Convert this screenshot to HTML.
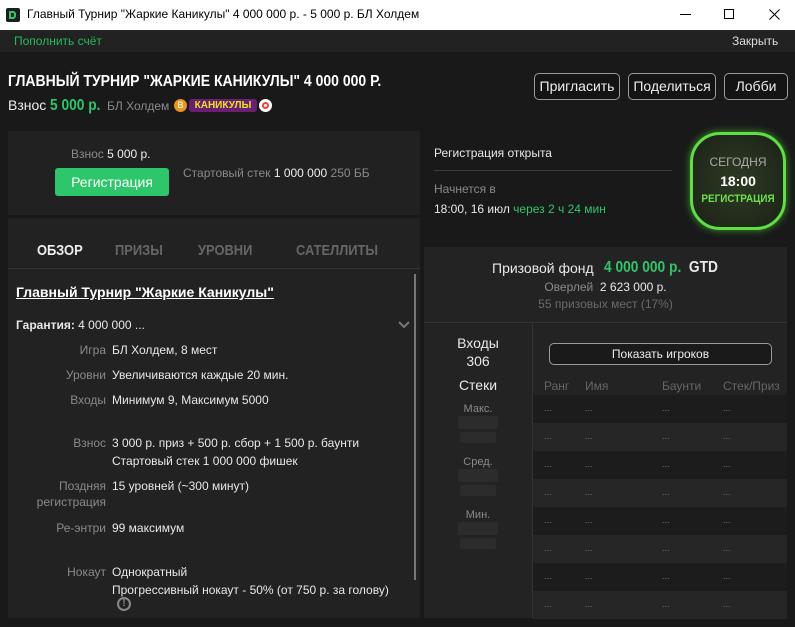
<!DOCTYPE html>
<html><head><meta charset="utf-8">
<style>
*{margin:0;padding:0;box-sizing:border-box}
body{width:795px;height:627px;background:#19191a;font-family:"Liberation Sans",sans-serif;color:#e8e8e8;position:relative;overflow:hidden;font-size:12px}
.a{position:absolute;white-space:nowrap}
.g{color:#2ec66a}
.m{color:#8a8a8a}
.cn{display:inline-block;transform:scaleX(0.86);transform-origin:left center}
.btn{position:absolute;border:1px solid #9a9a9a;border-radius:5px;height:27px;line-height:25px;text-align:center;font-size:14px;color:#eee;background:#141414}
.lab{position:absolute;right:0;width:106px;text-align:right;color:#8a8a8a;font-size:12px;line-height:16px}
.val{position:absolute;left:112px;font-size:12px;line-height:18px;color:#e8e8e8;white-space:nowrap}
.dots{position:absolute;color:#777;font-size:9px}
.bar{position:absolute;background:#2c2c2c;border-radius:2px}
.tab{position:absolute;top:242px;font-size:15px;font-weight:bold;color:#666;transform:scaleX(0.86);transform-origin:left center;white-space:nowrap}
</style></head><body>
<div class="a" style="left:0;top:0;width:795px;height:30px;background:#fff"></div>
<div class="a" style="left:6px;top:8px;width:14px;height:14px;background:#1e1e1e;border-radius:2px"><div style="position:absolute;left:3px;top:3px;width:7px;height:8px;border:2px solid #2ec66a;border-radius:0 3px 3px 0"></div></div>
<div class="a" style="left:27px;top:7px;color:#000;font-size:12px">Главный Турнир "Жаркие Каникулы" 4 000 000 р. - 5 000 р. БЛ Холдем</div>
<div class="a" style="left:680px;top:14px;width:11px;height:1px;background:#000"></div>
<div class="a" style="left:724px;top:9px;width:10px;height:10px;border:1px solid #000"></div>
<svg class="a" style="left:769px;top:9px" width="11" height="11"><path d="M0.5 0.5L10.5 10.5M10.5 0.5L0.5 10.5" stroke="#000" stroke-width="1"/></svg>
<div class="a" style="left:0;top:30px;width:795px;height:22px;background:#222"></div>
<div class="a" style="left:14px;top:34px;font-size:12px;color:#28b860">Пополнить счёт</div>
<div class="a" style="left:732px;top:34px;font-size:12px;color:#ddd">Закрыть</div>
<div class="a" style="left:8px;top:73px;font-size:16px;font-weight:bold;color:#fff;transform:scaleX(0.875);transform-origin:left center">ГЛАВНЫЙ ТУРНИР "ЖАРКИЕ КАНИКУЛЫ" 4 000 000 Р.</div>
<div class="a" style="left:8px;top:97px;font-size:14px;color:#eee">Взнос <b class="g cn" style="font-size:16px">5 000 р.</b></div>
<div class="a m" style="left:107px;top:99px;font-size:12px">БЛ Холдем</div>
<div class="a" style="left:174px;top:99px;width:13px;height:13px;border-radius:50%;background:#e6961e;color:#fff;font-size:9px;text-align:center;line-height:13px">B</div>
<div class="a" style="left:189px;top:99px;width:68px;height:13px;background:#6a1e74;border-radius:3px;color:#e8e61a;font-size:10px;font-weight:bold;text-align:center;line-height:13px">КАНИКУЛЫ</div>
<div class="a" style="left:259px;top:99px;width:13px;height:13px;border-radius:50%;background:#fff"><div style="position:absolute;left:3px;top:3px;width:7px;height:7px;border-radius:50%;border:2px solid #e43"></div></div>
<div class="btn" style="left:534px;top:73px;width:86px">Пригласить</div>
<div class="btn" style="left:628px;top:73px;width:88px">Поделиться</div>
<div class="btn" style="left:724px;top:73px;width:64px">Лобби</div>
<div class="a" style="left:8px;top:131px;width:412px;height:84px;background:#212122"></div>
<div class="a m" style="left:71px;top:147px">Взнос <span style="color:#eee">5 000 р.</span></div>
<div class="a" style="left:55px;top:168px;width:114px;height:28px;background:#2ec66a;border-radius:3px;color:#fff;font-size:14px;text-align:center;line-height:28px">Регистрация</div>
<div class="a m" style="left:183px;top:166px">Стартовый стек <span style="color:#eee">1 000 000</span> 250 ББ</div>
<div class="a" style="left:8px;top:218px;width:412px;height:400px;background:#222223"></div>
<div class="tab" style="left:37px;color:#eee">ОБЗОР</div>
<div class="tab" style="left:115px">ПРИЗЫ</div>
<div class="tab" style="left:198px">УРОВНИ</div>
<div class="tab" style="left:296px">САТЕЛЛИТЫ</div>
<div class="a" style="left:8px;top:268px;width:412px;height:1px;background:#333"></div>
<div class="a" style="left:414px;top:274px;width:2px;height:306px;background:#777"></div>
<div class="a" style="left:16px;top:284px;font-size:14px;font-weight:bold;color:#fff;text-decoration:underline">Главный Турнир "Жаркие Каникулы"</div>
<div class="a" style="left:16px;top:318px;font-size:12px"><b>Гарантия:</b> 4 000 000 ...</div>
<svg class="a" style="left:398px;top:321px" width="12" height="8"><path d="M1 1L6 6L11 1" stroke="#777" stroke-width="2" fill="none"/></svg>
<div class="a" style="left:0;top:341px;width:420px">
 <div class="lab" style="left:0;top:1px">Игра</div><div class="val" style="top:0">БЛ Холдем, 8 мест</div>
 <div class="lab" style="left:0;top:26px">Уровни</div><div class="val" style="top:25px">Увеличиваются каждые 20 мин.</div>
 <div class="lab" style="left:0;top:51px">Входы</div><div class="val" style="top:50px">Минимум 9, Максимум 5000</div>
 <div class="lab" style="left:0;top:94px">Взнос</div><div class="val" style="top:93px">3 000 р. приз + 500 р. сбор + 1 500 р. баунти<br>Стартовый стек 1 000 000 фишек</div>
 <div class="lab" style="left:0;top:137px">Поздняя<br>регистрация</div><div class="val" style="top:136px">15 уровней (~300 минут)</div>
 <div class="lab" style="left:0;top:179px">Ре-энтри</div><div class="val" style="top:178px">99 максимум</div>
 <div class="lab" style="left:0;top:223px">Нокаут</div><div class="val" style="top:222px">Однократный<br>Прогрессивный нокаут - 50% (от 750 р. за голову)</div>
</div>
<div class="a" style="left:117px;top:597px;width:14px;height:14px;border:2px solid #888;border-radius:50%;color:#888;font-size:10px;font-weight:bold;text-align:center;line-height:10px">!</div>
<div class="a" style="left:434px;top:146px;font-size:12px">Регистрация открыта</div>
<div class="a" style="left:434px;top:170px;width:238px;height:1px;background:#3a3a3a"></div>
<div class="a m" style="left:434px;top:182px">Начнется в</div>
<div class="a" style="left:434px;top:202px">18:00, 16 июл <span class="g">через 2 ч 24 мин</span></div>
<div class="a" style="left:690px;top:132px;width:96px;height:98px;border:3px solid #5ee040;border-radius:30px;background:radial-gradient(#2c3a22,#1c2218);box-shadow:0 0 8px #3a9a2a"></div>
<div class="a" style="left:690px;top:155px;width:96px;text-align:center;color:#aaa;font-size:12px">СЕГОДНЯ</div>
<div class="a" style="left:690px;top:173px;width:96px;text-align:center;color:#fff;font-size:14px;font-weight:bold">18:00</div>
<div class="a" style="left:690px;top:193px;width:96px;text-align:center;color:#6fe04a;font-size:11px;font-weight:bold;transform:scaleX(0.9)">РЕГИСТРАЦИЯ</div>
<div class="a" style="left:424px;top:247px;width:363px;height:371px;background:#232324"></div>
<div class="a" style="left:492px;top:260px;font-size:14px">Призовой фонд</div>
<div class="a" style="left:604px;top:259px;font-size:16px;font-weight:bold;transform:scaleX(0.86);transform-origin:left center"><span class="g">4 000 000 р.</span>&nbsp; GTD</div>
<div class="a" style="left:424px;top:280px;width:363px;text-align:center;font-size:12px"><span class="m">Оверлей</span>&nbsp; 2 623 000 р.</div>
<div class="a" style="left:424px;top:297px;width:363px;text-align:center;font-size:12px;color:#6a6a6a">55 призовых мест (17%)</div>
<div class="a" style="left:424px;top:322px;width:363px;height:1px;background:#333"></div>
<div class="a" style="left:532px;top:323px;width:1px;height:295px;background:#333"></div>
<div class="a" style="left:424px;top:334px;width:108px;text-align:center;font-size:14px;line-height:18px">Входы<br>306</div>
<div class="a" style="left:424px;top:377px;width:108px;text-align:center;font-size:14px">Стеки</div>
<div class="a m" style="left:424px;top:403px;width:108px;text-align:center;font-size:11px">Макс.</div>
<div class="bar" style="left:458px;top:416px;width:40px;height:13px"></div><div class="bar" style="left:460px;top:432px;width:36px;height:11px"></div>
<div class="a m" style="left:424px;top:456px;width:108px;text-align:center;font-size:11px">Сред.</div>
<div class="bar" style="left:458px;top:469px;width:40px;height:13px"></div><div class="bar" style="left:460px;top:485px;width:36px;height:11px"></div>
<div class="a m" style="left:424px;top:509px;width:108px;text-align:center;font-size:11px">Мин.</div>
<div class="bar" style="left:458px;top:522px;width:40px;height:13px"></div><div class="bar" style="left:460px;top:538px;width:36px;height:11px"></div>
<div class="btn" style="left:549px;top:343px;width:223px;height:22px;line-height:20px;font-size:12px;background:#1a1a1a">Показать игроков</div>
<div class="a" style="left:544px;top:379px;color:#666;font-size:12px">Ранг</div>
<div class="a" style="left:585px;top:379px;color:#666;font-size:12px">Имя</div>
<div class="a" style="left:662px;top:379px;color:#666;font-size:12px">Баунти</div>
<div class="a" style="left:723px;top:379px;color:#666;font-size:12px">Стек/Приз</div>
<div id="rows"></div>
<script>
var h='';for(var i=0;i<8;i++){var t=395+i*28;h+='<div class="a" style="left:533px;top:'+t+'px;width:254px;height:28px;background:'+(i%2?'#262627':'#1c1c1d')+'"></div>';[544,585,662,723].forEach(function(x){h+='<div class="dots" style="left:'+x+'px;top:'+(t+8)+'px">...</div>'});}
document.getElementById('rows').innerHTML=h;
</script>
</body></html>
